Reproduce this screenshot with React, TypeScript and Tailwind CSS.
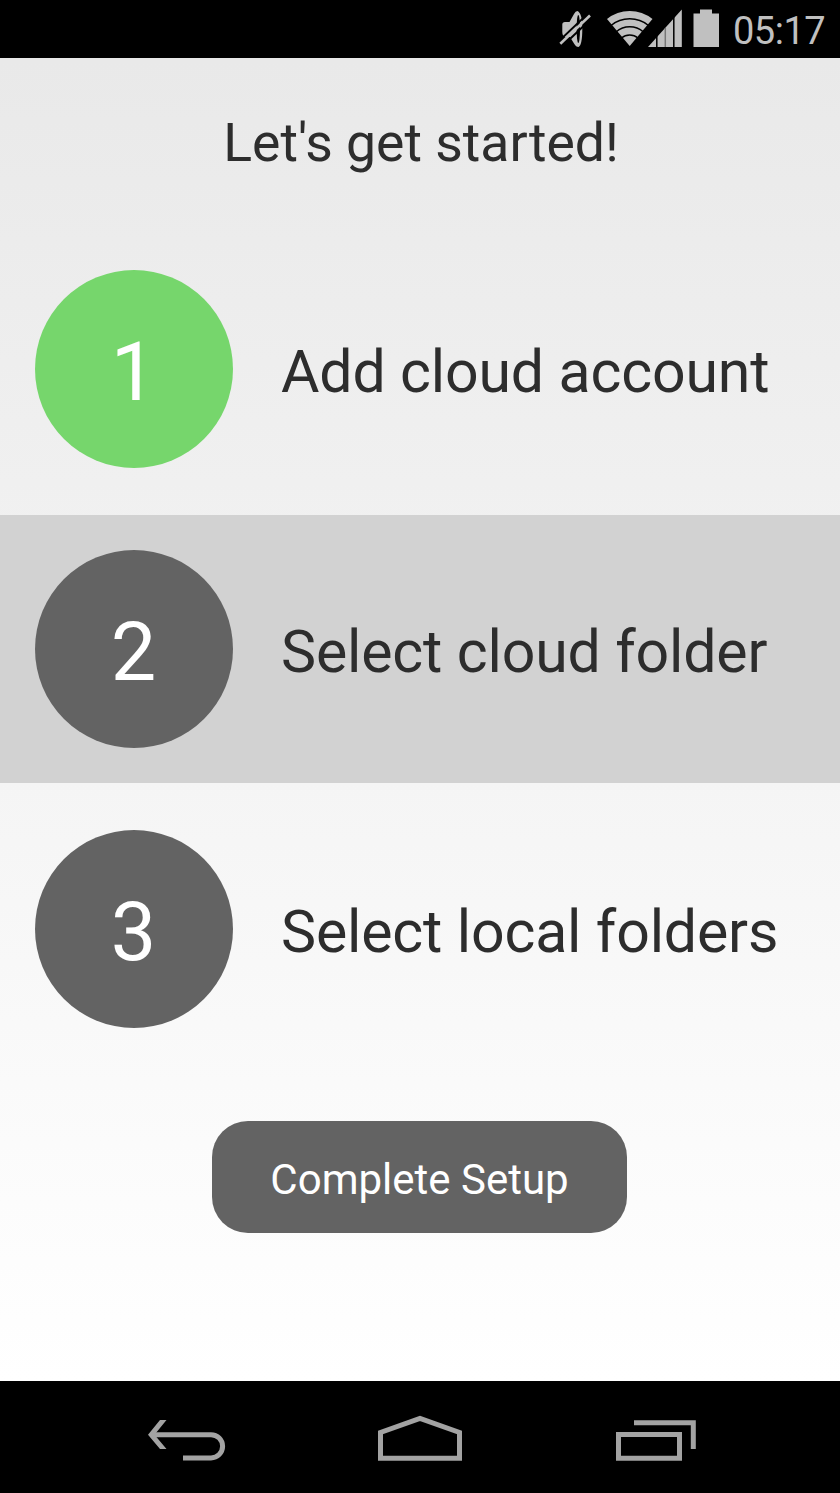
import clsx from "clsx";

interface Step {
    number: number;
    label: string;
    done?: boolean;
    pressed?: boolean;
}

const steps: Step[] = [
    { number: 1, label: "Add cloud account", done: true },
    { number: 2, label: "Select cloud folder", pressed: true },
    { number: 3, label: "Select local folders" },
];

function StatusBar() {
    return (
        <div className="flex h-[58px] shrink-0 items-start justify-end bg-black pr-[15px]">
            {/* Muted, wifi, signal and battery */}
            <svg className="shrink-0" width="180" height="58" viewBox="540 0 180 58" fill="#c0c0c0">
                <path d="M562.3 24.5Q562.3 22 565 22H569.5L574 14Q575.5 11 577.5 11Q582.3 13 582.3 29Q582.3 45 578.5 47Q576 47 574 43.5L570 37H565Q562.3 36 562.3 32Z" />
                <ellipse cx="578.3" cy="29" rx="1.7" ry="14" fill="#000" />
                <path d="M562 46.5L592 18" stroke="#000" strokeWidth="2" />
                <path d="M558.5 41.5L588 13.5" stroke="#000" strokeWidth="1.8" />
                <path d="M560.3 43.8L590 15.5" stroke="#c0c0c0" strokeWidth="2.6" />
                <path d="M629.7 46L607 19Q617 11 629.7 11T652.5 19Z" />
                <g fill="none" stroke="#000" strokeWidth="1.5">
                    <path d="M611 25.5Q619 18.8 629.7 18.8T648.5 25.5" />
                    <path d="M616 32Q622 26.8 629.7 26.8T643.5 32" />
                    <path d="M621.5 38Q625 35 629.7 35T638 38" />
                </g>
                <path d="M648 47L681.8 9.5V47Z" />
                <path d="M656.8 34V47M673.8 16V47" stroke="#000" strokeWidth="1.5" />
                <path d="M665.3 28V47" stroke="#777" strokeWidth="1.5" />
                <path d="M693.5 13.5H700V9.5H712V13.5H719V47H693.5Z" />
            </svg>
            <span className="ml-[13px] mt-[11px] w-[92px] text-[38px] leading-[40px] tracking-[-0.5px] text-[#c0c0c0]">
                05:17
            </span>
        </div>
    );
}

function StepRow({ step }: { step: Step }) {
    return (
        <div className={clsx("flex h-[268px] items-center pl-[35px]", step.pressed && "bg-[#d2d2d2]")}>
            <div
                className={clsx(
                    "flex size-[198px] shrink-0 items-center justify-center rounded-full text-[81px] leading-none text-white",
                    step.done ? "bg-[#76d66c]" : "bg-[#636363]"
                )}
            >
                <span className="pt-[7px] pr-px">{step.number}</span>
            </div>
            <span className="ml-[48px] pt-[4px] text-[59px] leading-none tracking-[-0.15px] whitespace-nowrap">
                {step.label}
            </span>
        </div>
    );
}

function NavBar() {
    return (
        <div className="h-[112px] shrink-0 bg-black">
            <svg width="840" height="112" viewBox="0 1381 840 112" fill="none" stroke="#a3a3a3" strokeWidth="5">
                {/* Back */}
                <path d="M151 1434.7H211A11.6 11.6 0 0 1 211 1457.9H183" />
                <path d="M160 1420H166.5L154.5 1434.7L166.5 1449H160L148 1434.7Z" fill="#a3a3a3" stroke="none" />
                {/* Home */}
                <path d="M380.5 1458.2V1432.5L420 1418.5L459.5 1432.5V1458.2Z" />
                {/* Recent apps */}
                <path d="M618.5 1434.5H679.5V1458.2H618.5Z" />
                <path d="M634 1422.8H693.3V1449" />
            </svg>
        </div>
    );
}

export default function App() {
    return (
        <div className="flex h-[1493px] w-[840px] flex-col overflow-hidden font-['Roboto',sans-serif] text-[#2d2d2d]">
            <StatusBar />
            <main className="flex flex-1 flex-col items-center bg-linear-to-b from-[#e9e9e9] to-white">
                <h1 className="mt-[53px] h-[124px] pl-[2px] text-[53.5px] leading-[64px]">Let's get started!</h1>
                <div className="flex w-full flex-col gap-3">
                    {steps.map((step) => (
                        <StepRow key={step.number} step={step} />
                    ))}
                </div>
                <button className="mt-[58px] mr-px h-[112px] w-[415px] rounded-[36px] bg-[#636363] pt-[4px] text-[42px] text-white">
                    Complete Setup
                </button>
            </main>
            <NavBar />
        </div>
    );
}
